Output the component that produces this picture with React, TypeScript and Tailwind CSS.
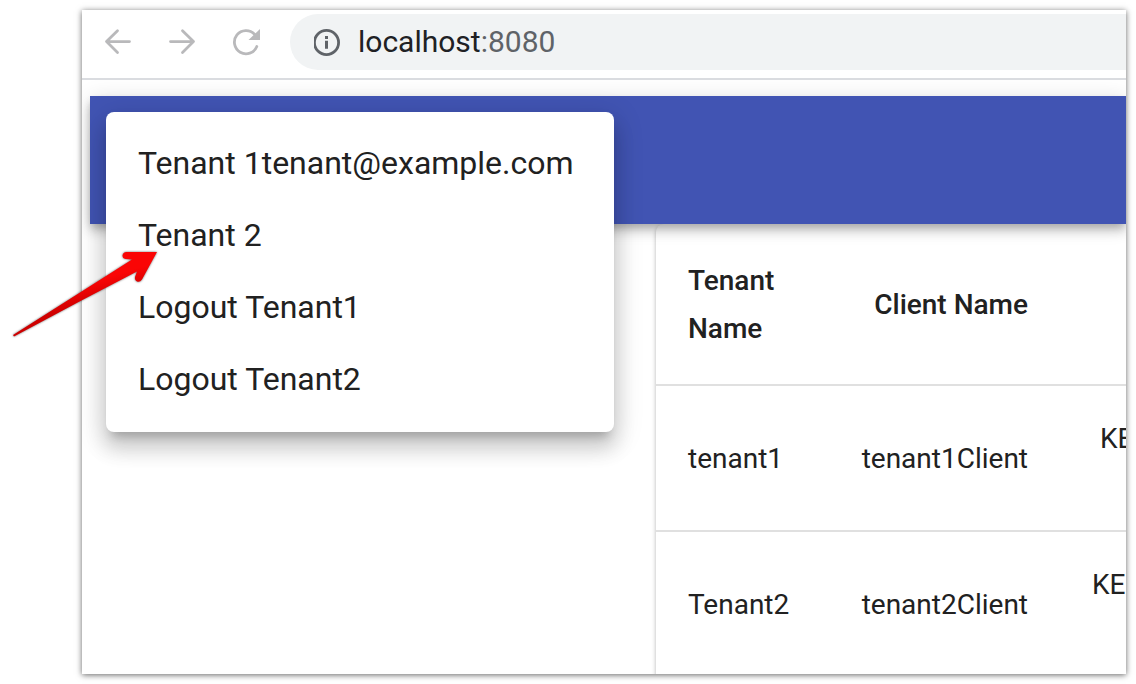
const menuItems = ["Tenant 1tenant@example.com", "Tenant 2", "Logout Tenant1", "Logout Tenant2"];

const rows = [
  { tenant: "tenant1", client: "tenant1Client", extra: "KE", pad: "pl-10" },
  { tenant: "Tenant2", client: "tenant2Client", extra: "KE", pad: "pl-8" },
];

function BrowserBar() {
  return (
    <div className="flex h-[70px] shrink-0 items-center border-b-2 border-[#dadce0] pb-1">
      <div className="flex gap-8 pl-5 text-[#b9b9bb]">
        <button type="button" aria-label="Back" className="size-8">
          <svg viewBox="0 0 32 32" className="size-8" fill="none" stroke="currentColor" strokeWidth="2.8" strokeLinecap="round" strokeLinejoin="round">
            <path d="M27.500 15.600H4.500M15.500 4.800L4.500 15.600L15.500 26.500" />
          </svg>
        </button>
        <button type="button" aria-label="Forward" className="size-8">
          <svg viewBox="0 0 32 32" className="size-8" fill="none" stroke="currentColor" strokeWidth="2.8" strokeLinecap="round" strokeLinejoin="round">
            <path d="M4.500 15.600H27.500M16.500 4.800L27.500 15.600L16.500 26.500" />
          </svg>
        </button>
        <button type="button" aria-label="Reload" className="size-8">
          <svg viewBox="0 0 32 32" className="size-8" fill="none">
            <path d="M26.800 20.500A11.600 11.600 0 1 1 24.500 8.300" stroke="currentColor" strokeWidth="2.800" strokeLinecap="round" />
            <path d="M30 3V14H18.500Z" fill="currentColor" />
          </svg>
        </button>
      </div>
      <div className="ml-7 flex h-14 min-w-0 flex-1 items-center rounded-l-full bg-[#f1f3f4] pl-6">
        <svg viewBox="0 0 28 28" className="size-7 shrink-0" fill="none" aria-hidden="true">
          <circle cx="12.500" cy="14.500" r="12.100" stroke="#5f6368" strokeWidth="2.800" />
          <path d="M11 8h3v3h-3zM11 12.800h3v8h-3z" fill="#5f6368" />
        </svg>
        <span className="ml-4 text-[30px] leading-8 text-[#5f6368]">
          <span className="text-[#202124]">localhost</span>:8080
        </span>
      </div>
    </div>
  );
}

function TenantTable() {
  return (
    <div className="min-w-0 flex-1 overflow-hidden rounded-tl-lg bg-white shadow-[0_2px_4px_rgba(0,0,0,0.3)]">
      <table className="w-full table-fixed border-collapse text-[28px]">
        <colgroup>
          <col className="w-[170px]" />
          <col className="w-[234px]" />
          <col />
        </colgroup>
        <thead>
          <tr className="border-b-2 border-[#e0e0e0] leading-[48px]">
            <th className="pt-[33px] pr-8 pb-[31px] pl-8 text-left font-medium">Tenant Name</th>
            <th className="pt-[2px] pr-8 text-right font-medium">Client Name</th>
            <td />
          </tr>
        </thead>
        <tbody>
          {rows.map((row) => (
            <tr key={row.tenant} className="h-[146px] border-b-2 border-[#e0e0e0] leading-10">
              <td className="pt-[2px] pl-8">{row.tenant}</td>
              <td className="pt-[2px] pr-8 text-right">{row.client}</td>
              <td className={`pt-[33px] align-top ${row.pad}`}>{row.extra}</td>
            </tr>
          ))}
        </tbody>
      </table>
    </div>
  );
}

export default function App() {
  return (
    <div className="relative flex h-screen flex-col bg-white pt-[10px] pr-[10px] pb-[10px] pl-[82px] font-['Roboto','Liberation_Sans',sans-serif] text-[#212121]">
      <div className="flex min-h-0 flex-1 flex-col overflow-hidden bg-white shadow-[0_1px_6px_rgba(0,0,0,0.6)]">
        <BrowserBar />
        <main className="flex min-h-0 flex-1 flex-col overflow-hidden pt-4 pl-2">
          <header className="relative z-10 h-32 shrink-0 bg-[#4154b3] shadow-[0_4px_8px_-2px_rgba(0,0,0,0.2),0_8px_10px_rgba(0,0,0,0.14),0_2px_20px_rgba(0,0,0,0.12)]">
            <ul role="menu" className="absolute top-4 left-4 w-[508px] rounded-lg bg-white py-4 shadow-[0_10px_10px_-6px_rgba(0,0,0,0.2),0_16px_20px_2px_rgba(0,0,0,0.14),0_6px_28px_4px_rgba(0,0,0,0.12)]">
              {menuItems.map((item) => (
                <li key={item} role="none">
                  <button type="button" role="menuitem" className="h-[72px] w-full px-8 pb-[2px] text-left text-[32px] leading-[48px] whitespace-nowrap">
                    {item}
                  </button>
                </li>
              ))}
            </ul>
          </header>
          <div className="flex flex-1 pl-[566px]">
            <TenantTable />
          </div>
        </main>
      </div>
      <svg viewBox="0 0 160 100" className="pointer-events-none absolute top-[244px] left-2 z-20 h-[100px] w-40 drop-shadow-[0_0_1px_rgba(0,0,0,0.6)]" aria-hidden="true">
        <defs>
          <linearGradient id="arrow" x1="0.45" y1="0.4" x2="0.55" y2="0.6">
            <stop offset="0" stopColor="#fa0505" />
            <stop offset="1" stopColor="#cf0000" />
          </linearGradient>
        </defs>
        <path d="M5 91L72 48.500L124 15.500L117.500 15Q114.500 14.500 114.500 11.500Q115 8 118.500 8H149L134 35.500Q132 38.500 129 37.500Q126.500 36 127 33L129 27.500L72 57.300L6 92.500Z" fill="url(#arrow)" />
      </svg>
    </div>
  );
}
